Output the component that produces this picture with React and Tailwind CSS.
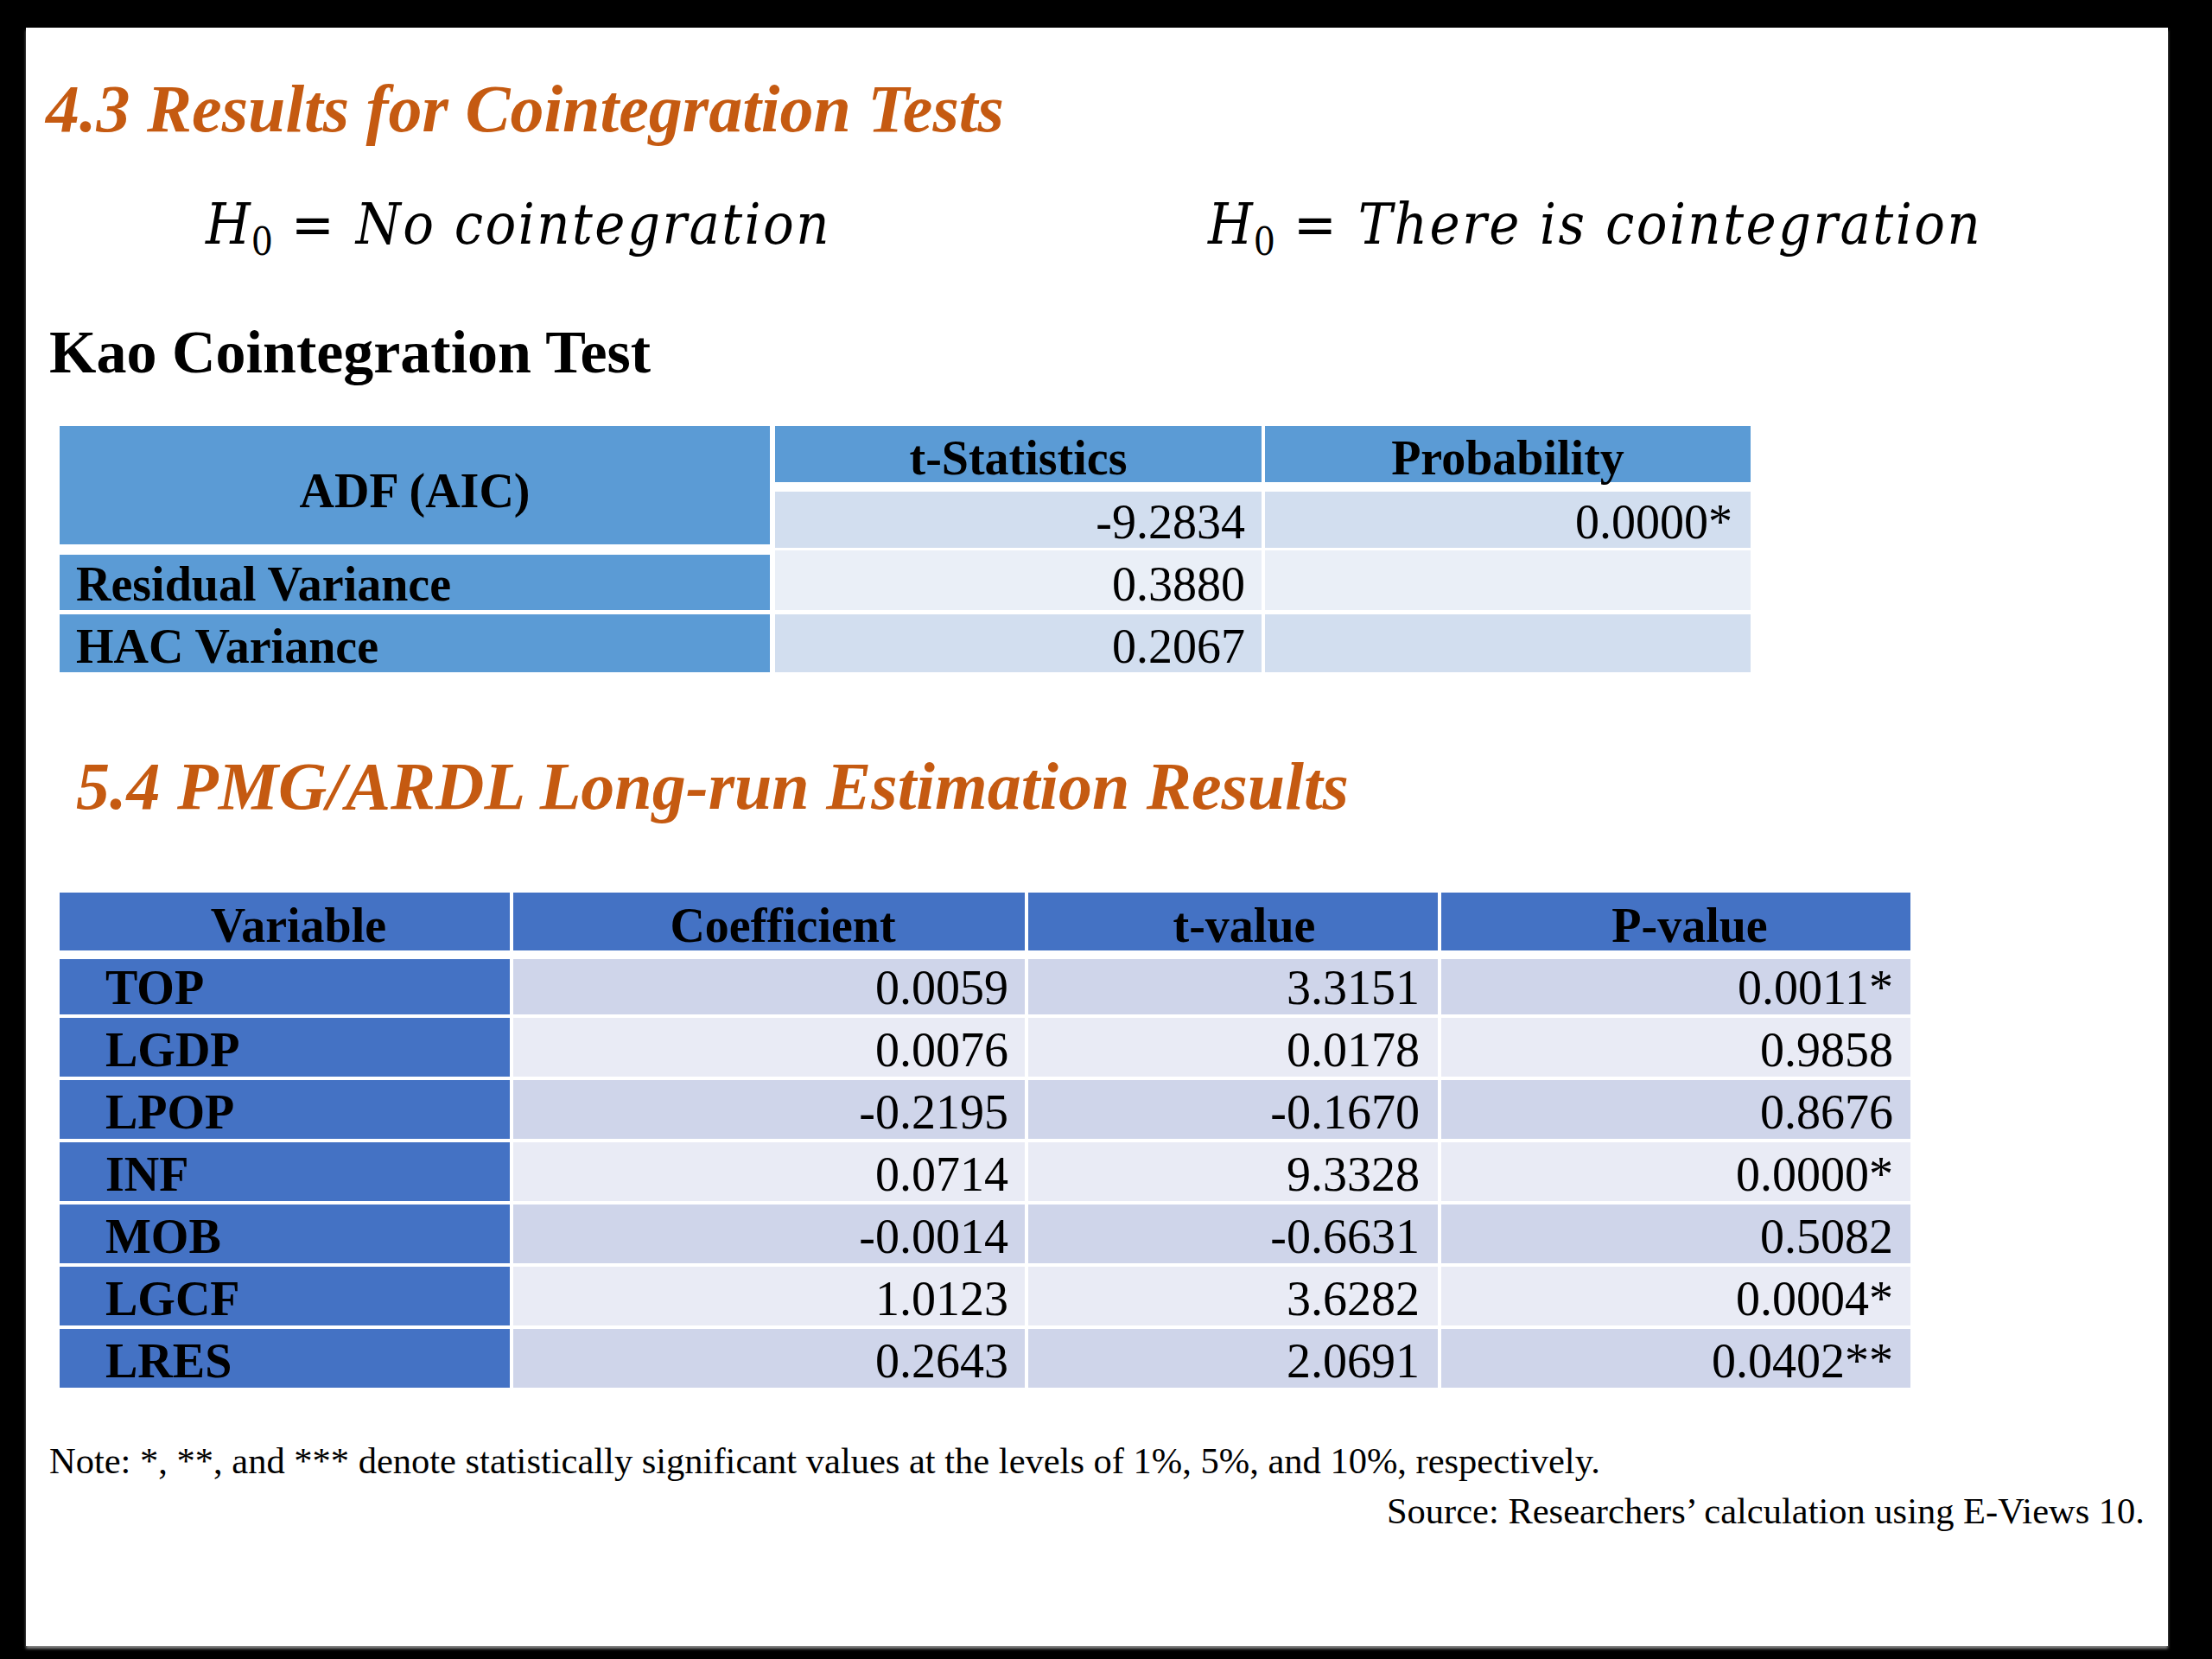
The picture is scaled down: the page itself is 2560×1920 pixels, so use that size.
const kaoRows = [
  { label: "Residual Variance", stat: "0.3880", prob: "", bg: "bg-[#EAEFF7]", top: "border-t-[5px]", h: "h-[69px]", mt: "mt-[3px]" },
  { label: "HAC Variance", stat: "0.2067", prob: "", bg: "bg-[#D2DEEF]", top: "border-t-0", h: "h-[67px]", mt: "mt-[5px]" },
];

const pmgRows = [
  { v: "TOP", c: "0.0059", t: "3.3151", p: "0.0011*", h: "h-[64px]" },
  { v: "LGDP", c: "0.0076", t: "0.0178", p: "0.9858", h: "h-[68px]" },
  { v: "LPOP", c: "-0.2195", t: "-0.1670", p: "0.8676", h: "h-[68px]" },
  { v: "INF", c: "0.0714", t: "9.3328", p: "0.0000*", h: "h-[68px]" },
  { v: "MOB", c: "-0.0014", t: "-0.6631", p: "0.5082", h: "h-[68px]" },
  { v: "LGCF", c: "1.0123", t: "3.6282", p: "0.0004*", h: "h-[68px]" },
  { v: "LRES", c: "0.2643", t: "2.0691", p: "0.0402**", h: "h-[68px]" },
];

function Hypothesis({ text }) {
  return (
    <div className="h-[66px] whitespace-pre font-['DejaVu_Serif_Condensed','DejaVu_Serif',serif] text-[66px] leading-none text-black">
      <span className="italic">H</span>
      <span className="ml-[1px] align-[-13px] text-[44px]">0</span>
      <span className="ml-[21px] mr-[25px]">=</span>
      <span className="italic tracking-[2.5px]">{text}</span>
    </div>
  );
}

function KaoTable() {
  const cell = "flex leading-none";
  return (
    <div className="ml-[39px] mt-[50px] flex w-[1957px] flex-col text-[56px]">
      <div className="flex">
        <div className={`${cell} h-[137px] w-[822px] items-center justify-center bg-[#5B9BD5] pt-[13px] font-bold`}>
          ADF (AIC)
        </div>
        <div className="ml-[6px] flex flex-col">
          <div className="flex h-[65px]">
            <div className={`${cell} w-[563px] items-end justify-center bg-[#5B9BD5] font-bold`}>t-Statistics</div>
            <div className={`${cell} ml-[4px] w-[562px] items-end justify-center bg-[#5B9BD5] font-bold`}>Probability</div>
          </div>
          <div className="mt-[11px] flex h-[65px]">
            <div className={`${cell} w-[563px] items-end justify-end bg-[#D2DEEF] pb-[2px] pr-[19px]`}>-9.2834</div>
            <div className={`${cell} ml-[4px] w-[562px] items-end justify-end bg-[#D2DEEF] pb-[2px] pr-[21px]`}>0.0000*</div>
          </div>
        </div>
      </div>
      {kaoRows.map((r) => (
        <div key={r.label} className={`flex ${r.h} ${r.mt}`}>
          <div className={`${cell} w-[822px] items-end border-white ${r.top} bg-[#5B9BD5] pb-[2px] pl-[19px] font-bold`}>
            {r.label}
          </div>
          <div className={`${cell} ml-[6px] w-[563px] items-end justify-end ${r.bg} pb-[2px] pr-[19px]`}>{r.stat}</div>
          <div className={`${cell} ml-[4px] w-[562px] items-end justify-end ${r.bg} pb-[2px] pr-[21px]`}>{r.prob}</div>
        </div>
      ))}
    </div>
  );
}

function PmgTable() {
  const cell = "flex items-end leading-none";
  return (
    <div className="ml-[39px] mt-[84px] flex w-[2142px] flex-col gap-[4px] text-[56px]">
      <div className="mb-[6px] flex h-[67px] gap-[4px] font-bold">
        <div className={`${cell} w-[521px] justify-center bg-[#4472C4] pb-[1px] pl-[32px]`}>Variable</div>
        <div className={`${cell} w-[592px] justify-center bg-[#4472C4] pb-[1px] pl-[32px]`}>Coefficient</div>
        <div className={`${cell} w-[474px] justify-center bg-[#4472C4] pb-[1px] pl-[26px]`}>t-value</div>
        <div className={`${cell} w-[543px] justify-center bg-[#4472C4] pb-[1px] pl-[32px]`}>P-value</div>
      </div>
      {pmgRows.map((r, i) => {
        const bg = i % 2 === 0 ? "bg-[#CFD5EA]" : "bg-[#E9EBF5]";
        return (
          <div key={r.v} className={`flex ${r.h} gap-[4px]`}>
            <div className={`${cell} w-[521px] bg-[#4472C4] pb-[3px] pl-[53px] font-bold`}>{r.v}</div>
            <div className={`${cell} w-[592px] justify-end ${bg} pb-[3px] pr-[19px]`}>{r.c}</div>
            <div className={`${cell} w-[474px] justify-end ${bg} pb-[3px] pr-[21px]`}>{r.t}</div>
            <div className={`${cell} w-[543px] justify-end ${bg} pb-[3px] pr-[20px]`}>{r.p}</div>
          </div>
        );
      })}
    </div>
  );
}

export default function App() {
  return (
    <div className="h-[1920px] w-[2560px] overflow-hidden bg-black pl-[30px] pt-[32px]">
      <div className="flex h-[1873px] w-[2479px] flex-col bg-white font-['Liberation_Serif','Times_New_Roman',serif] text-black shadow-[0_3px_3px_rgba(150,150,150,0.9)]">
        <h1 className="ml-[23px] mt-[55px] text-[78px] font-bold italic leading-none text-[#C55A11]">
          4.3 Results for Cointegration Tests
        </h1>

        <div className="ml-[208px] mt-[62px] flex h-[66px]">
          <div className="w-[1160px]">
            <Hypothesis text="No cointegration" />
          </div>
          <Hypothesis text="There is cointegration" />
        </div>

        <h2 className="ml-[27px] mt-[80px] text-[70px] font-bold leading-none">Kao Cointegration Test</h2>

        <KaoTable />

        <h2 className="ml-[58px] mt-[93px] text-[78px] font-bold italic leading-none text-[#C55A11]">
          5.4 PMG/ARDL Long-run Estimation Results
        </h2>

        <PmgTable />

        <p className="ml-[27px] mt-[64px] text-[42.5px] leading-none">
          Note: *, **, and *** denote statistically significant values at the levels of 1%, 5%, and 10%, respectively.
        </p>
        <p className="mr-[27px] mt-[15px] self-end text-[42.5px] leading-none">
          Source: Researchers’ calculation using E-Views 10.
        </p>
      </div>
    </div>
  );
}
